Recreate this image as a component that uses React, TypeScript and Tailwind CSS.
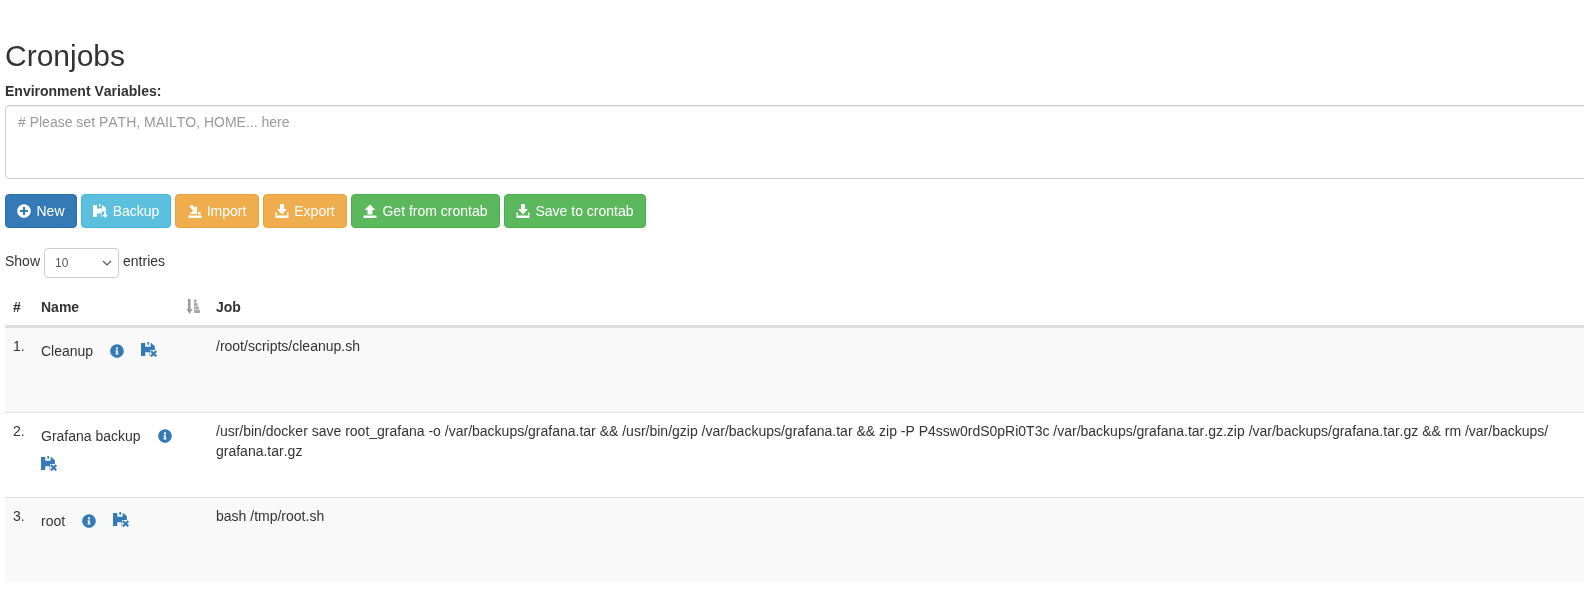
import React from 'react';
import { FaPlusCircle, FaInfoCircle } from 'react-icons/fa';

const FloppyBase = () => (
  <path d="M0 1h4v3.500h5V1h0.500L13 4v3.500H8.500V13H8V9.500H4V13H0zM6 0h1.500v2.500H6z" />
);

const BackupIcon = () => (
  <svg width="15" height="14" viewBox="0 0 15 14" fill="currentColor">
    <FloppyBase />
    <path d="M11 8h2v2.800h2L12 14l-3-3.200h2z" />
  </svg>
);

const CrossFloppyIcon = () => (
  <svg width="16" height="15" viewBox="0 0 15 14" fill="currentColor">
    <FloppyBase />
    <path d="M10 7.800l1.900 1.700 1.700-1.700 1.400 1.400-1.700 1.800 1.700 1.700-1.400 1.400-1.700-1.700-1.900 1.700-1.400-1.400 1.800-1.700-1.800-1.800z" />
  </svg>
);

const TrayIcon = ({ kind }: { kind: 'import' | 'export' | 'up' }) => (
  <svg width="14" height="14" viewBox="0 0 14 14" fill="currentColor">
    <path d="M0.500 11.500h13V14H0.500z" />
    {kind === 'export' && <path d="M5 0h4v5h3L7 10.500 2 5h3zM0.500 8.500h1.500v3H0.500zM12 8.500h1.500v3H12z" />}
    {kind === 'up' && <path d="M7 0.500l5.500 5.500H9.500v4.500h-5V6H1.500z" />}
    {kind === 'import' && <path d="M1.500 2.500L4 0.500l2.500 3 1-1h1.500v7.500H1.500l3.500-3.500zM10 8h2.500v2.500H10z" />}
  </svg>
);

const SortIcon = () => (
  <svg width="14" height="15" viewBox="0 0 14 15">
    <path fill="#999" d="M2 0h2.500v10H6.500l-3 5L0.500 10H2z" />
    <path fill="#aaa" d="M8 0.500h2.500v3H8zM8 4h3.500v3H8zM8 7.500h5v3H8zM8 11h6v3H8z" />
  </svg>
);

const Btn = ({ bg, width, icon, label }: { bg: string; width: string; icon: React.ReactNode; label: string }) => (
  <button className={`flex items-center justify-center gap-[5px] h-[34px] rounded border text-white text-sm ${bg} ${width}`}>
    {icon}
    <span>{label}</span>
  </button>
);

const NameActions = ({ name, wrap }: { name: string; wrap?: boolean }) => (
  <div className="flex items-center flex-wrap text-[#333]">
    <span className="mr-[17px] leading-5 mt-[5px]">{name}</span>
    <FaInfoCircle size={14} className="text-[#337ab7] mt-[5px] mr-[17px]" />
    <span className={`text-[#337ab7] ${wrap ? 'w-full mt-[10px]' : 'mt-[2px]'}`}>
      <CrossFloppyIcon />
    </span>
  </div>
);

const rows = [
  { n: '1.', name: 'Cleanup', job: '/root/scripts/cleanup.sh', cls: 'bg-[#f9f9f9] h-[86px] border-b border-[#ddd]' },
  {
    n: '2.',
    name: 'Grafana backup',
    wrap: true,
    job: '/usr/bin/docker save root_grafana -o /var/backups/grafana.tar && /usr/bin/gzip /var/backups/grafana.tar && zip -P P4ssw0rdS0pRi0T3c /var/backups/grafana.tar.gz.zip /var/backups/grafana.tar.gz && rm /var/backups/ grafana.tar.gz',
    cls: 'bg-white h-[85px] border-b border-[#ddd]',
  },
  { n: '3.', name: 'root', job: 'bash /tmp/root.sh', cls: 'bg-[#f9f9f9] h-[85px]' },
];

export default function App() {
  return (
    <div className="w-[1584px] h-[594px] overflow-hidden bg-white text-[#333] text-sm font-['Liberation_Sans',Arial,sans-serif]">
      <div className="w-[1620px] pl-[5px] pt-[39px] will-change-transform [font-kerning:none]">
        <h2 className="text-[30px] leading-[33px] mb-[9px]">Cronjobs</h2>
        <label className="block font-bold leading-5 mb-[4px]">Environment Variables:</label>
        <textarea
          className="block w-full h-[74px] rounded border border-[#ccc] px-3 py-1.5 leading-5 [font-kerning:none] shadow-[inset_0_1px_1px_rgba(0,0,0,0.075)] placeholder:text-[#999] resize-none"
          placeholder="# Please set PATH, MAILTO, HOME... here"
        />
        <div className="flex gap-1 mt-[15px]">
          <Btn bg="bg-[#337ab7] border-[#2e6da4]" width="w-[72px]" icon={<FaPlusCircle size={14} />} label="New" />
          <Btn bg="bg-[#5bc0de] border-[#46b8da]" width="w-[90px]" icon={<BackupIcon />} label="Backup" />
          <Btn bg="bg-[#f0ad4e] border-[#eea236]" width="w-[84px]" icon={<TrayIcon kind="import" />} label="Import" />
          <Btn bg="bg-[#f0ad4e] border-[#eea236]" width="w-[84px]" icon={<TrayIcon kind="export" />} label="Export" />
          <Btn bg="bg-[#5cb85c] border-[#4cae4c]" width="w-[149px]" icon={<TrayIcon kind="up" />} label="Get from crontab" />
          <Btn bg="bg-[#5cb85c] border-[#4cae4c]" width="w-[142px]" icon={<TrayIcon kind="export" />} label="Save to crontab" />
        </div>
        <div className="flex items-center gap-1 mt-[20px] h-[30px]">
          <span className="mb-1">Show</span>
          <div className="relative w-[75px] h-[30px] rounded border border-[#ccc] text-xs text-[#555] flex items-center pl-[10px]">
            10
            <svg className="absolute right-[6px] top-[11px]" width="10" height="7" viewBox="0 0 10 7" fill="none" stroke="#555" strokeWidth="1.200">
              <path d="M1 1l4 4 4-4" />
            </svg>
          </div>
          <span className="mb-1">entries</span>
        </div>
        <table className="w-full table-fixed mt-[11px] border-collapse">
          <thead>
            <tr className="border-b-[3px] border-[#ddd] h-[37px]">
              <th className="w-[28px] px-2 text-left font-bold">#</th>
              <th className="w-[175px] px-2 text-left font-bold relative">
                Name
                <span className="absolute right-[8px] top-[10px]">
                  <SortIcon />
                </span>
              </th>
              <th className="px-2 text-left font-bold">Job</th>
            </tr>
          </thead>
          <tbody>
            {rows.map((r) => (
              <tr key={r.n} className={`align-top ${r.cls}`}>
                <td className="p-2">{r.n}</td>
                <td className="p-2">
                  <NameActions name={r.name} wrap={r.wrap} />
                </td>
                <td className="p-2 leading-5 pr-[60px]">{r.job}</td>
              </tr>
            ))}
          </tbody>
        </table>
      </div>
    </div>
  );
}
